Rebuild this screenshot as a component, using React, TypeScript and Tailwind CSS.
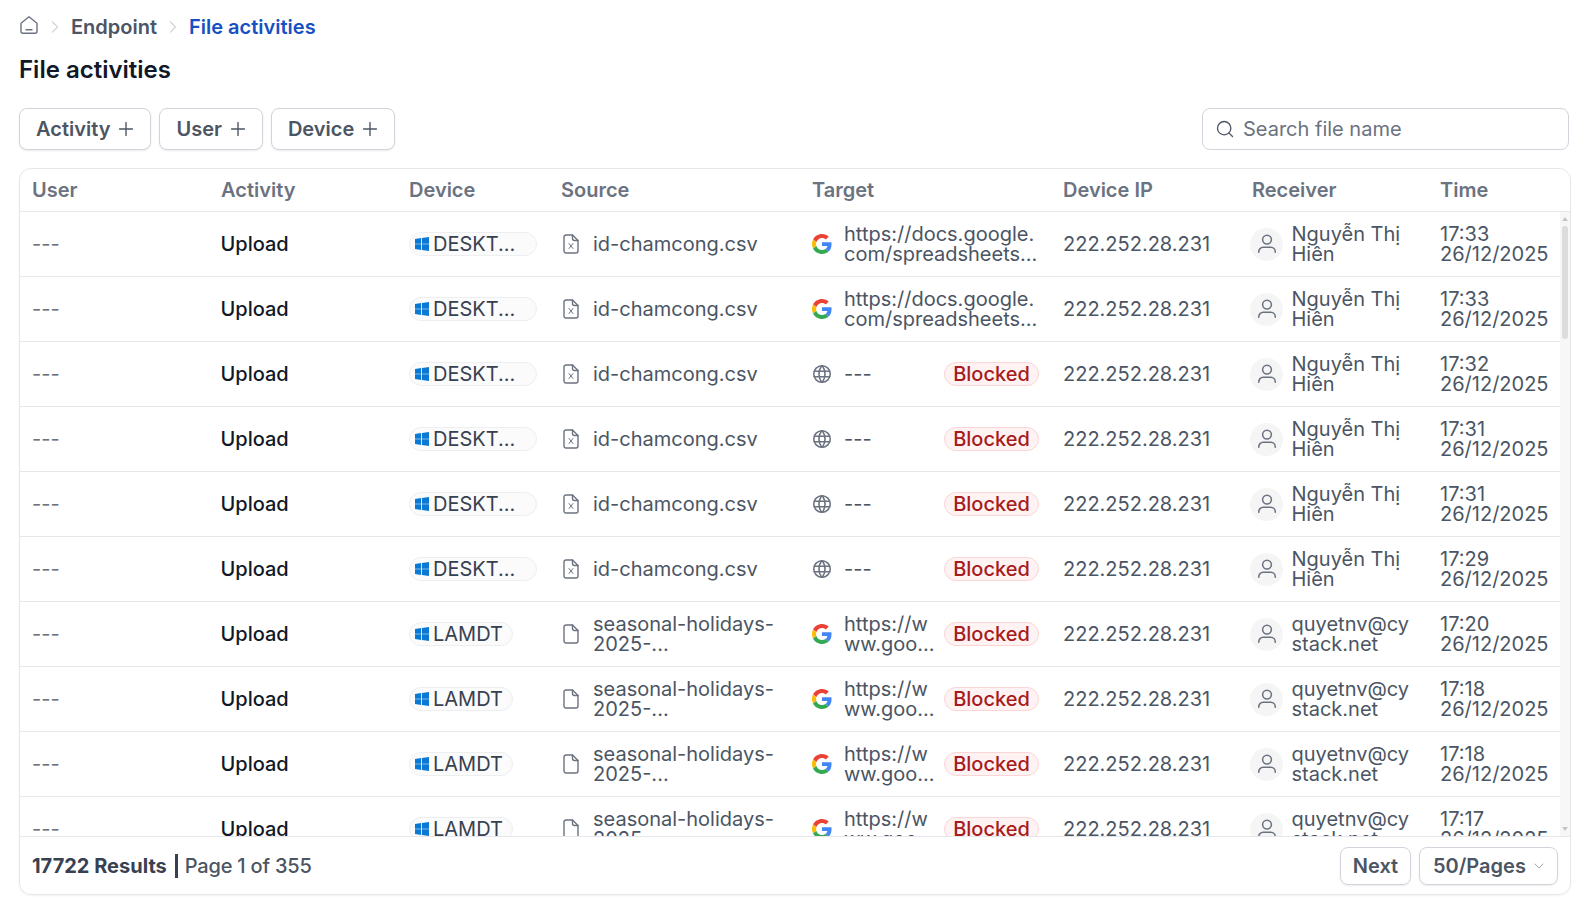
import { ChevronDown, ChevronRight, Plus, Search } from "lucide-react";

type Row = {
  device: string;
  deviceWidth: string;
  source: string[];
  csv: boolean;
  target: string[];
  google: boolean;
  blocked: boolean;
  receiver: string[];
  time: string;
};

const hien = ["Nguyễn Thị", "Hiên"];
const quyet = ["quyetnv@cy", "stack.net"];
const holidays = ["seasonal-holidays-", "2025-..."];
const docs = ["https://docs.google.", "com/spreadsheets..."];
const goo = ["https://w", "ww.goo..."];

const desktop = { device: "DESKT...", deviceWidth: "w-[128px]", source: ["id-chamcong.csv"], csv: true, receiver: hien };
const lamdt = { device: "LAMDT", deviceWidth: "w-[104px]", source: holidays, csv: false, receiver: quyet };

const rows: Row[] = [
  { ...desktop, target: docs, google: true, blocked: false, time: "17:33" },
  { ...desktop, target: docs, google: true, blocked: false, time: "17:33" },
  { ...desktop, target: ["---"], google: false, blocked: true, time: "17:32" },
  { ...desktop, target: ["---"], google: false, blocked: true, time: "17:31" },
  { ...desktop, target: ["---"], google: false, blocked: true, time: "17:31" },
  { ...desktop, target: ["---"], google: false, blocked: true, time: "17:29" },
  { ...lamdt, target: goo, google: true, blocked: true, time: "17:20" },
  { ...lamdt, target: goo, google: true, blocked: true, time: "17:18" },
  { ...lamdt, target: goo, google: true, blocked: true, time: "17:18" },
  { ...lamdt, target: goo, google: true, blocked: true, time: "17:17" },
];

function HomeIcon() {
  return (
    <svg width="20" height="20" viewBox="0 0 20 20" fill="none" stroke="#6b7280" strokeWidth="1.4" strokeLinejoin="round" strokeLinecap="round" className="-mt-[5px]">
      <path d="M2 8.200 10 1.800l8 6.400v8a2 2 0 0 1-2 2H4a2 2 0 0 1-2-2z" />
      <path d="M7 14.800h6" />
    </svg>
  );
}

function WindowsIcon() {
  return (
    <svg width="14" height="14" viewBox="0 0 15 15" fill="#0b78d4" className="shrink-0">
      <path d="M0 2.200 6.600 1.200v5.900H0zM7.500 1.100 15 0v7.100H7.500zM0 7.900h6.600v5.900L0 12.800zM7.500 7.900H15V15l-7.500-1.100z" />
    </svg>
  );
}

function GoogleIcon() {
  return (
    <svg width="20" height="20" viewBox="0 0 48 48" className="shrink-0">
      <path fill="#EA4335" d="M24 9.500c3.500 0 6.700 1.200 9.200 3.600l6.900-6.900C35.900 2.400 30.500 0 24 0 14.600 0 6.500 5.400 2.600 13.200l8 6.200C12.500 13.700 17.800 9.500 24 9.500z" />
      <path fill="#4285F4" d="M46.900 24.500c0-1.600-.1-3.100-.4-4.500H24v9h12.900c-.6 3-2.200 5.500-4.700 7.200l7.700 6c4.500-4.200 7-10.300 7-17.700z" />
      <path fill="#FBBC05" d="M10.500 28.600c-.5-1.400-.8-3-.8-4.600s.3-3.200.8-4.600l-8-6.200C.9 16.500 0 20.100 0 24s.9 7.500 2.600 10.800z" />
      <path fill="#34A853" d="M24 48c6.500 0 11.900-2.100 15.900-5.800l-7.700-6c-2.200 1.400-4.900 2.300-8.200 2.300-6.200 0-11.500-4.200-13.400-9.900l-8 6.200C6.500 42.600 14.600 48 24 48z" />
    </svg>
  );
}

function GlobeIcon() {
  return (
    <svg width="22" height="22" viewBox="0 0 24 24" fill="none" stroke="#6b7280" strokeWidth="1.700" strokeLinecap="round" strokeLinejoin="round" className="-ml-px shrink-0">
      <path d="M3 12a9 9 0 1 0 18 0a9 9 0 0 0-18 0" />
      <path d="M3.600 9h16.800" />
      <path d="M3.600 15h16.800" />
      <path d="M11.500 3a17 17 0 0 0 0 18" />
      <path d="M12.500 3a17 17 0 0 1 0 18" />
    </svg>
  );
}

function FileIcon({ csv }: { csv: boolean }) {
  return (
    <svg width="16" height="20" viewBox="0 0 16 20" fill="none" stroke="#6b7280" strokeWidth="1.400" strokeLinejoin="round" strokeLinecap="round" className="shrink-0">
      <path d="M3 1h6.500L15 6.500V17a2 2 0 0 1-2 2H3a2 2 0 0 1-2-2V3a2 2 0 0 1 2-2z" />
      <path d="M9.500 1v3.500a2 2 0 0 0 2 2H15" />
      {csv && <path d="m6 9.500 4 5M10 9.500l-4 5" strokeWidth="1" />}
    </svg>
  );
}

function UserIcon() {
  return (
    <div className="flex h-[33px] w-[33px] shrink-0 items-center justify-center rounded-full bg-[#f5f5f5]">
      <svg width="22" height="22" viewBox="0 0 20 20" fill="none" stroke="#6b7280" strokeWidth="1.400" strokeLinecap="round">
        <circle cx="10" cy="6" r="4" />
        <path d="M2.500 17.500v-.5a4 4 0 0 1 4-4h7a4 4 0 0 1 4 4v.5" />
      </svg>
    </div>
  );
}

function FilterButton({ label }: { label: string }) {
  return (
    <button className="flex h-[42px] items-center gap-[5px] rounded-[8px] border border-[#d1d5db] bg-white pl-[16px] pr-[13px] font-semibold text-[#4b5563] shadow-[0_1px_2px_rgba(0,0,0,0.08)]">
      {label}
      <Plus size={22} strokeWidth={1.5} />
    </button>
  );
}

function TwoLines({ lines }: { lines: string[] }) {
  return (
    <div className="min-w-0 leading-[20px]">
      {lines.map((line) => (
        <div key={line} className="whitespace-nowrap">
          {line}
        </div>
      ))}
    </div>
  );
}

const headers = [
  { label: "User", w: "w-[189px]" },
  { label: "Activity", w: "w-[188px]" },
  { label: "Device", w: "w-[152px]" },
  { label: "Source", w: "w-[251px]" },
  { label: "Target", w: "w-[251px]" },
  { label: "Device IP", w: "w-[189px]" },
  { label: "Receiver", w: "w-[188px]" },
  { label: "Time", w: "w-[133px]" },
];

function TableRow({ row }: { row: Row }) {
  return (
    <div className="flex h-[65px] shrink-0 items-center border-b border-[#e5e7eb] text-[#4b5563]">
      <div className="w-[189px] shrink-0 pl-[12px] text-[#6b7280]">---</div>
      <div className="w-[188px] shrink-0 pl-[11.5px] font-medium text-[#111827]">Upload</div>
      <div className="w-[152px] shrink-0 pl-[12px]">
        <div className={`flex h-[24px] items-center gap-[4px] rounded-full border border-[#eceef0] bg-[#fbfbfb] pl-[5px] text-[#374151] ${row.deviceWidth}`}>
          <WindowsIcon />
          {row.device}
        </div>
      </div>
      <div className="flex w-[251px] shrink-0 items-center gap-[14px] pl-[14px]">
        <FileIcon csv={row.csv} />
        <TwoLines lines={row.source} />
      </div>
      <div className="flex w-[251px] shrink-0 items-center px-[12px]">
        {row.google ? <GoogleIcon /> : <GlobeIcon />}
        <div className={`min-w-0 flex-1 ${row.google ? "ml-[12px]" : "ml-[11px]"}`}>
          <TwoLines lines={row.target} />
        </div>
        {row.blocked && (
          <span className="flex h-[24px] w-[95px] shrink-0 items-center justify-center rounded-full border border-[#fbd5d5] bg-[#fef2f2] font-medium text-[#a61b1b]">
            Blocked
          </span>
        )}
      </div>
      <div className="w-[189px] shrink-0 pl-[12px]">222.252.28.231</div>
      <div className="flex w-[188px] shrink-0 items-center gap-[8.500px] pl-[10px]">
        <UserIcon />
        <TwoLines lines={row.receiver} />
      </div>
      <div className="w-[132px] shrink-0 pl-[12px]">
        <TwoLines lines={[row.time, "26/12/2025"]} />
      </div>
    </div>
  );
}

export default function App() {
  return (
    <div className="flex h-[913px] flex-col bg-white px-[19px] pt-[14px] font-['Inter',sans-serif] text-[20px]">
      <nav className="flex h-[26px] items-center font-medium text-[#4b5563]">
        <HomeIcon />
        <ChevronRight size={20} strokeWidth={1.5} className="ml-[6px] mr-[6px] text-[#d1d5db]" />
        <span className="font-semibold">Endpoint</span>
        <ChevronRight size={20} strokeWidth={1.5} className="ml-[6px] mr-[6px] text-[#d1d5db]" />
        <span className="font-semibold text-[#1750c4]">File activities</span>
      </nav>

      <h1 className="mt-[15px] text-[24px] font-semibold leading-[30px] text-[#111827]">File activities</h1>

      <div className="mt-[23px] flex items-center gap-2">
        <FilterButton label="Activity" />
        <FilterButton label="User" />
        <FilterButton label="Device" />
        <div className="ml-auto mr-px flex h-[42px] w-[367px] items-center gap-[8px] rounded-[8px] border border-[#d1d5db] pl-[12px]">
          <Search size={20} strokeWidth={1.6} className="text-[#4b5563]" />
          <span className="text-[#6b7280]">Search file name</span>
        </div>
      </div>

      <section className="mt-[18px] flex h-[727px] w-[1552px] flex-col overflow-hidden rounded-[12px] border border-[#e5e7eb] shadow-[0_1px_2px_rgba(0,0,0,0.05)]">
        <div className="flex h-[43px] shrink-0 items-center border-b border-[#e5e7eb] font-semibold text-[#6b7280]">
          {headers.map((h) => (
            <div key={h.label} className={`${h.w} shrink-0 pl-[12px]`}>
              {h.label}
            </div>
          ))}
        </div>

        <div className="flex min-h-0 flex-1 overflow-hidden">
          <div className="min-w-0 flex-1 overflow-hidden">
            {rows.map((row, i) => (
              <TableRow key={i} row={row} />
            ))}
          </div>
          <div className="flex w-[10px] shrink-0 flex-col items-center bg-[#f7f7f7] py-[5px]">
            <svg width="6" height="4" viewBox="0 0 6 4" fill="#c4c4c4">
              <path d="M3 0l3 4H0z" />
            </svg>
            <div className="mt-[5px] h-[113px] w-[6px] rounded-full bg-[#dcdcdc]" />
            <svg width="6" height="4" viewBox="0 0 6 4" fill="#c4c4c4" className="mt-auto">
              <path d="M3 4l3-4H0z" />
            </svg>
          </div>
        </div>

        <div className="flex h-[58px] shrink-0 items-center border-t border-[#e5e7eb] px-[12px]">
          <span className="font-bold text-[#374151]">17722 Results</span>
          <span className="ml-[8px] mr-[7px] h-[24px] w-[3px] bg-[#374151]" />
          <span className="font-medium tracking-[-0.01em] text-[#4b5563]">Page 1 of 355</span>
          <button className="ml-auto flex h-[38px] w-[71px] items-center justify-center rounded-[8px] border border-[#d1d5db] font-semibold text-[#4b5563] shadow-[0_1px_2px_rgba(0,0,0,0.08)]">
            Next
          </button>
          <button className="ml-2 flex h-[38px] w-[139px] items-center gap-[5px] rounded-[8px] border border-[#d1d5db] pl-[13px] font-semibold text-[#4b5563] shadow-[0_1px_2px_rgba(0,0,0,0.08)]">
            50/Pages
            <ChevronDown size={16} strokeWidth={1.5} className="text-[#9ca3af]" />
          </button>
        </div>
      </section>
    </div>
  );
}
